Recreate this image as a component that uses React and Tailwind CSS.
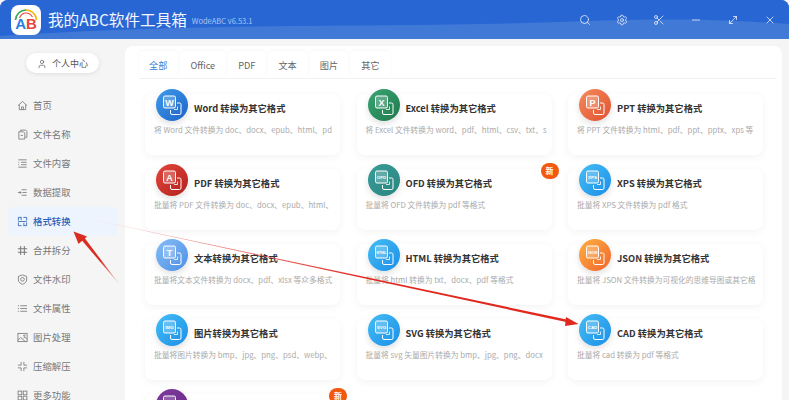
import React from 'react'
import { Minus, MoveDiagonal, Search, Settings, Scissors, User, X } from 'lucide-react'

const font = { fontFamily: '"Noto Sans CJK SC", "Noto Sans", sans-serif' }

// small stroke icons for the sidebar, drawn on a 12x12 box
const NavIcon = ({ children }) => (
  <svg viewBox="0 0 12 12" className="h-[11px] w-[11px] shrink-0" fill="none" stroke="currentColor" strokeWidth="0.9">
    {children}
  </svg>
)

const navItems = [
  { label: '首页', icon: <path d="M1 6.2L6 1.5l5 4.7M2.5 5v5.5h7V5M5 10.5V7.5h2v3" /> },
  { label: '文件名称', icon: <path d="M4 2.5V1.2h5.5L10.8 2.6V9H9M2 3h5l1.5 1.5v6.5H2ZM4 7h2.5" /> },
  { label: '文件内容', icon: <path d="M1.5 2h9M4.5 4.7h6M4.5 7.3h6M1.5 10h9M1.5 4.7h1M1.5 7.3h1" /> },
  { label: '数据提取', icon: <path d="M5 3h5.5M6 6h4.5M5 9h5.5M1 6h3.5M3 4.5L4.5 6 3 7.5" /> },
  { label: '格式转换', active: true, icon: <path d="M1.5 5V1.5H5M7 1.5h3.5V5M1.5 7v3.5H5M7 10.5h3.5V7M1.5 6h9M4.5 1.5v3M7.5 7.5v3" /> },
  { label: '合并拆分', icon: <path d="M4 1v10M8 1v10M1 4h10M1 8h10" strokeWidth="1.1" /> },
  { label: '文件水印', icon: <><path d="M6 1l4.5 1.6v4C10.5 9 8 10.6 6 11.2 4 10.6 1.5 9 1.5 6.6v-4Z" /><circle cx="6" cy="5.8" r="2" /></> },
  { label: '文件属性', icon: <path d="M1 3h1.2M3.5 3h7.5M1 6h1.2M3.5 6h7.5M1 9h1.2M3.5 9h7.5" /> },
  { label: '图片处理', icon: <><rect x="1" y="1.5" width="10" height="9" /><path d="M1 9l3-3 5 4.5M7 7l1.5-1.5L11 8" /><circle cx="8" cy="4" r="0.8" /></> },
  { label: '压缩解压', icon: <path d="M4.5 1v3.5H1M7.5 1v3.5H11M4.5 11V7.5H1M7.5 11V7.5H11" /> },
  { label: '更多功能', icon: <><rect x="1.2" y="1.2" width="4" height="4" /><rect x="6.8" y="1.2" width="4" height="4" /><rect x="1.2" y="6.8" width="4" height="4" /><rect x="6.8" y="6.8" width="4" height="4" /></> },
]

const tabs = ['全部', 'Office', 'PDF', '文本', '图片', '其它']

const cards = [
  { title: 'Word 转换为其它格式', desc: '将 Word 文件转换为 doc、docx、epub、html、pd', mark: 'W', circle: 'from-[#3f9be8] to-[#1f63c8]' },
  { title: 'Excel 转换为其它格式', desc: '将 Excel 文件转换为 word、pdf、html、csv、txt、s', mark: 'X', circle: 'from-[#3aa574] to-[#1f7a4d]' },
  { title: 'PPT 转换为其它格式', desc: '将 PPT 文件转换为 html、pdf、ppt、pptx、xps 等', mark: 'P', circle: 'from-[#f58a5c] to-[#e0502e]' },
  { title: 'PDF 转换为其它格式', desc: '批量将 PDF 文件转换为 doc、docx、epub、html、', mark: 'A', circle: 'from-[#e2463c] to-[#b3201c]' },
  { title: 'OFD 转换为其它格式', desc: '批量将 OFD 文件转换为 pdf 等格式', mark: 'OFD', circle: 'from-[#3a9c98] to-[#2a8580]', isNew: true },
  { title: 'XPS 转换为其它格式', desc: '批量将 XPS 文件转换为 pdf 格式', mark: 'XPS', circle: 'from-[#45bdf5] to-[#1b8fe6]' },
  { title: '文本转换为其它格式', desc: '批量将文本文件转换为 docx、pdf、xlsx 等众多格式', mark: 'T', circle: 'from-[#86bdf5] to-[#4d8fe6]' },
  { title: 'HTML 转换为其它格式', desc: '批量将 html 转换为 txt、docx、pdf 等格式', mark: 'HTML', circle: 'from-[#45bdf5] to-[#1b8fe6]' },
  { title: 'JSON 转换为其它格式', desc: '批量将 JSON 文件转换为可视化的思维导图或其它格', mark: 'JSON', circle: 'from-[#fbb040] to-[#f2622e]' },
  { title: '图片转换为其它格式', desc: '批量将图片转换为 bmp、jpg、png、psd、webp、', mark: 'IMG', circle: 'from-[#45bdf5] to-[#1b8fe6]' },
  { title: 'SVG 转换为其它格式', desc: '批量将 svg 矢量图片转换为 bmp、jpg、png、docx', mark: 'SVG', circle: 'from-[#45bdf5] to-[#1b8fe6]' },
  { title: 'CAD 转换为其它格式', desc: '批量将 cad 转换为 pdf 等格式', mark: 'CAD', circle: 'from-[#45bdf5] to-[#1b8fe6]' },
  { title: '', desc: '', mark: '', circle: 'from-[#7d3a9c] to-[#6a2a8a]', isNew: true },
]

const CardIcon = ({ mark, circle }) => (
  <div className={`flex h-[32px] w-[32px] shrink-0 items-center justify-center rounded-full bg-gradient-to-br ${circle} shadow-[0_3px_6px_rgba(0,0,0,0.12)]`}>
    <svg viewBox="0 0 32 32" className="h-[32px] w-[32px]" fill="none" stroke="white" strokeWidth="1">
      <rect x="7.5" y="7" width="12" height="12" rx="1.5" fill="rgba(255,255,255,0.22)" />
      <path d="M21 14h2.5a1.5 1.5 0 0 1 1.5 1.5V24a1.5 1.5 0 0 1-1.5 1.5H16a1.5 1.5 0 0 1-1.5-1.5v-3" />
      <path d="M18 20.5h3.5v-3" strokeWidth="0.8" />
      <text
        x="13.5"
        y={mark.length > 1 ? 14.6 : 16.5}
        textAnchor="middle"
        fill="white"
        stroke="none"
        fontWeight="700"
        fontSize={mark.length > 3 ? 3.6 : mark.length > 1 ? 4.4 : 9}
        fontFamily="Liberation Sans, sans-serif"
      >
        {mark}
      </text>
    </svg>
  </div>
)

const Card = ({ title, desc, mark, circle, isNew }) => (
  <div className="relative h-[61px] rounded-lg bg-white shadow-[0_2px_8px_rgba(0,0,0,0.05)]">
    <div className="-mt-[5px] flex items-center pl-[11px]">
      <CardIcon mark={mark} circle={circle} />
      <span className="ml-[6px] mt-[7px] whitespace-nowrap text-[9.3px] font-bold text-[#333]">{title}</span>
    </div>
    <p className="mt-[3px] overflow-hidden whitespace-nowrap pl-[9px] pr-[8px] text-[7.75px] leading-[12px] text-[#aaa]">{desc}</p>
    {isNew && (
      <span className="absolute -right-[7px] -top-[6px] flex h-[16px] w-[18px] items-center justify-center rounded-full bg-[#f2590f] text-[8px] font-bold text-white">新</span>
    )}
  </div>
)

const Arrows = () => (
  <svg className="pointer-events-none absolute left-0 top-0" width="789" height="400">
    <defs>
      <linearGradient id="tailA" x1="119" y1="284" x2="80" y2="240" gradientUnits="userSpaceOnUse">
        <stop offset="0" stopColor="#e0524a" stopOpacity="0.35" />
        <stop offset="0.5" stopColor="#d92c23" />
      </linearGradient>
      <linearGradient id="tailB" x1="90" y1="219" x2="360" y2="277" gradientUnits="userSpaceOnUse">
        <stop offset="0" stopColor="#e0524a" stopOpacity="0.3" />
        <stop offset="1" stopColor="#e0281f" />
      </linearGradient>
    </defs>
    <path d="M119.5 284.5L79 237L82 234.5Z" fill="url(#tailA)" />
    <path d="M73.5 231.5L87 236.5L78.5 244Z" fill="#d92c23" />
    <path d="M90 219L569 320L568.5 322.5Z" fill="url(#tailB)" />
    <path d="M578.5 324L566 317L565 326Z" fill="#e0281f" />
  </svg>
)

export default function App() {
  return (
    <div style={font} className="relative h-[400px] w-[789px] overflow-hidden bg-[#f5f5f5]">
      {/* title bar */}
      <header className="relative flex h-[39px] items-center overflow-hidden rounded-t-lg bg-[#4179d6]">
        <svg className="absolute left-0 top-0" width="789" height="39" preserveAspectRatio="none">
          <path d="M0 0H789V24C700 18 640 19 560 22C400 28 200 22 0 36Z" fill="#2866d4" />
        </svg>
        <div className="relative ml-[11px] flex h-[30px] w-[30px] items-center justify-center rounded-lg bg-white">
          <svg className="absolute left-0 top-0" width="30" height="30" fill="none" strokeWidth="1.7">
            <path d="M4.5 15C5 9 9.5 5 15 5" stroke="#35a853" />
            <path d="M15 5C20.5 5 25 9 25.5 15" stroke="#f4b400" />
            <path d="M8.5 13C10 9.5 12 8 15 8C18 8 20 9.5 21.5 12" stroke="#e8453c" strokeWidth="1.2" />
          </svg>
          <span className="relative mt-[7px] text-[15px] font-bold leading-none" style={{ fontFamily: '"Liberation Sans", sans-serif' }}>
            <span className="text-[#2a7de1]">A</span>
            <span className="text-[#e8453c]">B</span>
          </span>
        </div>
        <h1 className="relative ml-[7px] whitespace-nowrap text-[15.6px] font-normal leading-none text-[#f2f6fd]">我的ABC软件工具箱</h1>
        <span className="relative ml-[5px] mt-[3px] whitespace-nowrap text-[7.5px] text-[#a9c6f2]">WodeABC v6.53.1</span>
        <div className="relative ml-auto mr-[1px] flex items-center text-[#e8f0fc]">
          {[Search, Settings, Scissors, Minus, MoveDiagonal, X].map((Icon, i) => (
            <div key={i} className="flex w-[37px] justify-center">
              <Icon size={12} strokeWidth={1.6} />
            </div>
          ))}
        </div>
      </header>

      <div className="flex h-[361px]">
        {/* sidebar */}
        <aside className="w-[125px] shrink-0 pt-[14px]">
          <div className="ml-[26px] flex h-[20px] w-[73px] items-center justify-center gap-[5px] rounded-full bg-white pt-[1px] text-[9px] text-[#555] shadow-[0_1px_4px_rgba(0,0,0,0.1)]">
            <User size={10} strokeWidth={1.6} />
            个人中心
          </div>
          <nav className="mt-[18px] flex flex-col">
            {navItems.map(({ label, icon, active }) => (
              <div
                key={label}
                className={`ml-[8px] flex h-[29px] w-[110px] items-center gap-[5px] pl-[9px] text-[9.4px] ${active ? 'rounded-sm bg-[#edf4fd] font-medium text-[#2a62b8]' : 'text-[#777]'}`}
              >
                <NavIcon>{icon}</NavIcon>
                {label}
              </div>
            ))}
          </nav>
        </aside>

        {/* main panel */}
        <main className="mr-[7px] mt-[7px] flex-1 rounded-t-lg bg-white pl-[14px]">
          <div className="mr-[6px] flex h-[33px] items-end border-b border-[#f2f2f2]">
            {tabs.map((tab, i) => (
              <div
                key={tab}
                className={`mr-[3px] flex h-[27px] items-center justify-center rounded-t bg-white px-[10px] pt-[2px] text-[9.2px] shadow-[0_-1px_3px_rgba(0,0,0,0.04)] ${i === 0 ? 'text-[#3b82d6]' : 'text-[#666]'}`}
              >
                {tab}
              </div>
            ))}
          </div>
          <div className="ml-[6px] mt-[15px] grid grid-cols-[195px_195px_195px] gap-x-[16.5px] gap-y-[14px]">
            {cards.map((card, i) => (
              <Card key={i} {...card} />
            ))}
          </div>
        </main>
      </div>
      <Arrows />
    </div>
  )
}
